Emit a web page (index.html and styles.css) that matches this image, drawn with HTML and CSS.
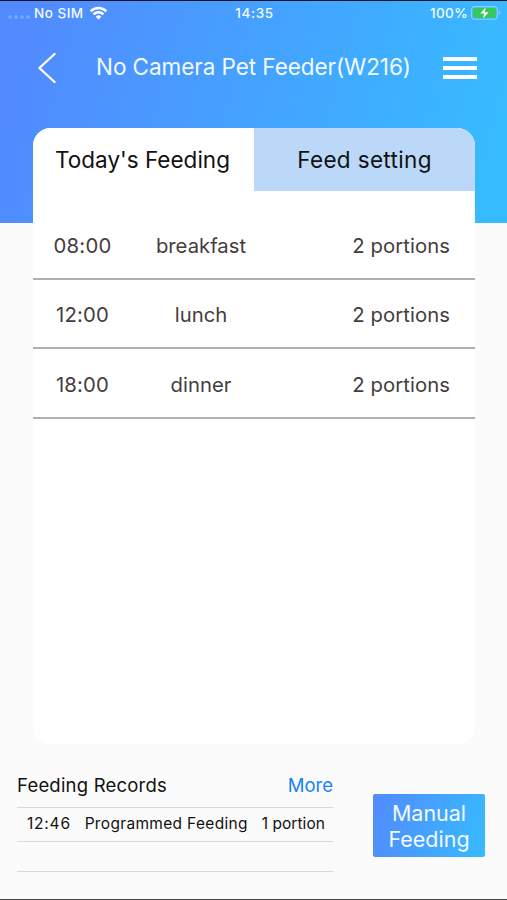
FILE: index.html
```html
<!DOCTYPE html>
<html lang="en">
<head>
    <meta charset="UTF-8">
    <meta name="viewport" content="width=device-width, initial-scale=1.0">
    <title>No Camera Pet Feeder(W216)</title>
    <link rel="stylesheet" href="styles.css">
</head>
<body>
    <div class="app">
        <header class="header">
            <div class="status-bar">
                <div class="status-left">
                    <div class="signal"><i></i><i></i><i></i><i></i></div>
                    <span class="carrier">No SIM</span>
                    <svg class="wifi" width="19" height="14" viewBox="0 0 18 14">
                        <path d="M1.2 5.2a11.2 11.2 0 0 1 15.6 0" fill="none" stroke="#fff" stroke-width="2.6"/>
                        <path d="M4.1 8.3a7 7 0 0 1 9.8 0" fill="none" stroke="#fff" stroke-width="2.4"/>
                        <path d="M9 13.4L6.2 10.7a4 4 0 0 1 5.6 0z" fill="#fff"/>
                    </svg>
                </div>
                <span class="clock">14:35</span>
                <div class="status-right">
                    <span class="percent">100%</span>
                    <svg class="battery" width="30" height="14" viewBox="0 0 30 14">
                        <rect x="0.6" y="0.6" width="25.8" height="12.6" rx="3.2" fill="none" stroke="#91cffb" stroke-width="1.1"/>
                        <rect x="2" y="2" width="23" height="9.8" rx="1.8" fill="#35c95c"/>
                        <path d="M27.8 5v4q1.4-.6 1.4-2t-1.4-2z" fill="#91cffb"/>
                        <path d="M14.8 1.2L9.3 7.6h3.8L12 12.6l5.6-6.4h-3.8z" fill="#fff"/>
                    </svg>
                </div>
            </div>
            <div class="nav">
                <svg class="back" width="20" height="32" viewBox="0 0 20 32">
                    <path d="M17.6 2L2.4 16l15.2 14" fill="none" stroke="#fff" stroke-width="2.3" stroke-linecap="round" stroke-linejoin="round"/>
                </svg>
                <h1>No Camera Pet Feeder(W216)</h1>
                <div class="menu"><i></i><i></i><i></i></div>
            </div>
        </header>

        <main class="card">
            <div class="tabs">
                <div class="tab active">Today's Feeding</div>
                <div class="tab tab-setting">Feed setting</div>
            </div>
            <ul class="meals">
                <li><span class="time">08:00</span><span class="meal">breakfast</span><span class="portions">2 portions</span></li>
                <li><span class="time">12:00</span><span class="meal">lunch</span><span class="portions">2 portions</span></li>
                <li><span class="time">18:00</span><span class="meal">dinner</span><span class="portions">2 portions</span></li>
            </ul>
        </main>

        <footer class="footer">
            <div class="records">
                <div class="records-head">
                    <h2>Feeding Records</h2>
                    <a class="more">More</a>
                </div>
                <div class="record">
                    <span class="record-time">12:46</span>
                    <span class="record-type">Programmed Feeding</span>
                    <span class="record-amount">1 portion</span>
                </div>
                <div class="record empty"></div>
            </div>
            <button class="manual">Manual<br>Feeding</button>
        </footer>
    </div>
</body>
</html>
```
FILE: styles.css
```css
* {
    box-sizing: border-box;
}
body {
    margin: 0;
    background-color: #fbfbfb;
    font-family: Inter, "Liberation Sans", sans-serif;
    color: #111;
}
.app {
    height: 900px;
    display: flex;
    flex-direction: column;
    overflow: hidden;
    white-space: nowrap;
    border-bottom: 1px solid #444;
}
.header {
    height: 223px;
    flex: none;
    border-top: 1px solid #0b1226;
    background: linear-gradient(105deg, #528aff 5%, #37bbff 95%);
    color: #f3faff;
}
.status-bar {
    height: 24px;
    display: grid;
    grid-template-columns: 1fr auto 1fr;
    align-items: center;
    padding: 0 6px 0 8px;
    font-size: 13.5px;
    font-weight: 500;
}
.status-left, .status-right {
    display: flex;
    align-items: center;
}
.status-right {
    justify-content: flex-end;
    gap: 3px;
}
.signal {
    display: flex;
    gap: 2px;
    margin: 8px 4px 0 0;
}
.signal i {
    width: 4px;
    height: 4px;
    border-radius: 50%;
    background-color: #73a6ff;
}
.carrier {
    letter-spacing: 0.5px;
    margin-right: 5px;
}
.clock {
    letter-spacing: 0.6px;
}
.percent {
    letter-spacing: 0.4px;
}
.nav {
    height: 85px;
    display: flex;
    align-items: center;
    padding: 0 30px 0 37px;
}
h1 {
    flex: 1;
    margin: 0 0 2px 7px;
    text-align: center;
    font-size: 22.5px;
    font-weight: 400;
    letter-spacing: -0.06px;
}
.menu {
    width: 34px;
    display: flex;
    flex-direction: column;
    gap: 5px;
}
.menu i {
    height: 4px;
    background-color: #fff;
}
.card {
    width: 442px;
    height: 616px;
    flex: none;
    margin: -95px 0 0 33px;
    background-color: #fff;
    border-radius: 18px;
    overflow: hidden;
}
.tabs {
    height: 63px;
    display: flex;
}
.tab {
    width: 50%;
    display: flex;
    align-items: center;
    justify-content: center;
    font-size: 22.5px;
    background-color: #bcd8f9;
}
.tab.active {
    background-color: #fff;
    padding-right: 2px;
}
.tab-setting {
    letter-spacing: 0.35px;
}
.meals {
    list-style-type: none;
    margin: 0;
    padding: 19px 0 0;
}
.meals li {
    height: 69.5px;
    display: grid;
    grid-template-columns: 99px 138px 1fr;
    align-items: center;
    padding-top: 3px;
    text-align: center;
    border-bottom: 2px solid #b0b0b0;
    font-size: 20.3px;
    color: #453c3c;
}
.time {
    letter-spacing: 0.2px;
}
.portions {
    text-align: right;
    padding-right: 25px;
    letter-spacing: 0.08px;
}
.footer {
    flex: 1;
    display: flex;
    justify-content: space-between;
    padding: 25px 22px 0 17px;
}
.records {
    width: 316px;
}
.records-head {
    height: 39px;
    display: flex;
    justify-content: space-between;
    padding-top: 5px;
    line-height: 22px;
    font-size: 18.5px;
    border-bottom: 1px solid #d9d9d9;
}
h2 {
    margin: 0;
    font-size: 18.5px;
    font-weight: 400;
    letter-spacing: 0.2px;
}
.more {
    color: #1683f5;
}
.record {
    height: 34px;
    display: flex;
    align-items: center;
    justify-content: space-between;
    padding: 0 8px 2px 10px;
    border-bottom: 1px solid #d9d9d9;
    font-size: 15.5px;
}
.record-time {
    letter-spacing: 0.8px;
}
.record-type {
    letter-spacing: 0.33px;
}
.record-amount {
    letter-spacing: 0.05px;
}
.record.empty {
    height: 30px;
}
.manual {
    width: 112px;
    height: 63px;
    margin: 25px 0 0;
    padding: 1px 0 0;
    border: none;
    border-radius: 2px;
    background: linear-gradient(105deg, #528aff, #37bbff);
    color: #f3faff;
    font-family: inherit;
    font-size: 21.5px;
    line-height: 26px;
}
```
